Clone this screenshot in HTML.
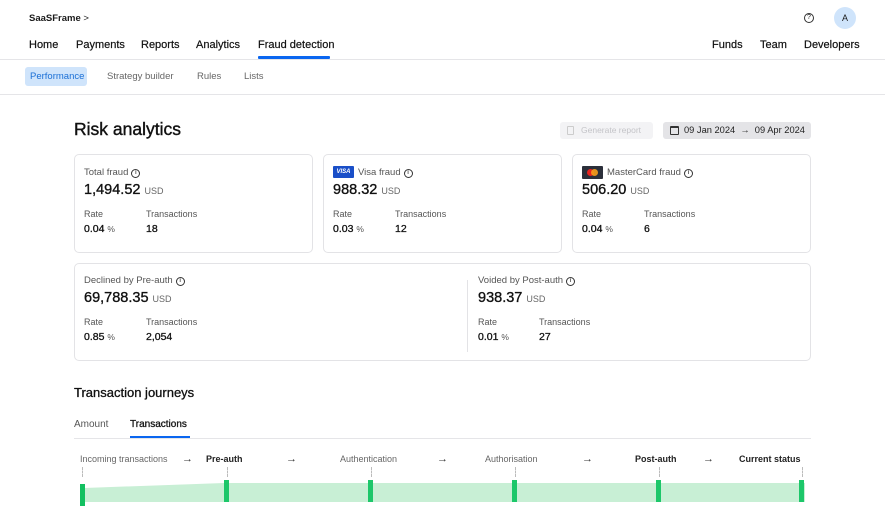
<!DOCTYPE html>
<html><head><meta charset="utf-8"><style>
*{margin:0;padding:0;box-sizing:border-box}
body{width:885px;height:502px;overflow:hidden;background:#fff;font-family:"Liberation Sans",sans-serif;color:#1a1a1a;position:relative}
.a{position:absolute;white-space:nowrap}
.nav{font-size:11px;top:39px;color:#111;-webkit-text-stroke:0.2px #111}
.sub{font-size:9.5px;top:71px;color:#666}
.card{position:absolute;border:1px solid #e3e3e6;border-radius:5px;background:#fff}
.lab{font-size:9.5px;color:#555}
.val{font-size:14.5px;color:#111;-webkit-text-stroke:0.35px #111}
.val small{font-size:9px;color:#666;-webkit-text-stroke:0}
.sm{font-size:9px;color:#555}
.nv{font-size:10.5px;color:#111;-webkit-text-stroke:0.3px #111}
.nv small{font-size:8.5px;color:#555;-webkit-text-stroke:0}
.i{display:inline-block;width:9px;height:9px;border:1px solid #333;border-radius:50%;font-size:6px;line-height:7px;text-align:center;vertical-align:1px;margin-left:3px;font-weight:bold}
.jh{font-size:9px;color:#666;top:454px}
.bar{position:absolute;top:480px;width:5px;height:22px;background:#1dc76a}
.tick{position:absolute;top:467px;height:10px;border-left:1px dashed #bbb}
.ar{font-size:11px;top:453px;color:#333}
</style></head><body>
<div class="a" style="left:29px;top:13px;font-size:9.5px;font-weight:bold">SaaSFrame <span style="font-weight:normal">&gt;</span></div>
<div class="a nav" style="left:29px">Home</div>
<div class="a nav" style="left:76px">Payments</div>
<div class="a nav" style="left:141px">Reports</div>
<div class="a nav" style="left:196px">Analytics</div>
<div class="a nav" style="left:258px">Fraud detection</div>
<div class="a" style="left:258px;top:56px;width:72px;height:3px;background:#0a66f0;border-radius:1px"></div>
<div class="a nav" style="left:712px">Funds</div>
<div class="a nav" style="left:760px">Team</div>
<div class="a nav" style="left:804px">Developers</div>
<div class="a" style="left:804px;top:13px;width:10px;height:10px;border:1px solid #333;border-radius:50%;font-size:7px;text-align:center;line-height:8px">?</div>
<div class="a" style="left:834px;top:7px;width:22px;height:22px;border-radius:50%;background:#cfe4fb;font-size:9px;text-align:center;line-height:22px">A</div>
<div class="a" style="left:0;top:59px;width:885px;height:1px;background:#e5e5e8"></div>
<div class="a" style="left:25px;top:67px;width:62px;height:19px;background:#cfe4fb;border-radius:3px"></div>
<div class="a sub" style="left:30px;color:#1a6fd6">Performance</div>
<div class="a sub" style="left:107px">Strategy builder</div>
<div class="a sub" style="left:197px">Rules</div>
<div class="a sub" style="left:244px">Lists</div>
<div class="a" style="left:0;top:94px;width:885px;height:1px;background:#e5e5e8"></div>

<div class="a" style="left:74px;top:119px;font-size:17.5px;color:#111;-webkit-text-stroke:0.4px #111">Risk analytics</div>
<div class="a" style="left:560px;top:122px;width:93px;height:17px;background:#f3f3f5;border-radius:3px;font-size:8.5px;color:#c4c4c8;padding-left:21px;line-height:17px">Generate report</div>
<div class="a" style="left:567px;top:126px;width:7px;height:9px;border:1px solid #ccc;border-radius:1px"></div>
<div class="a" style="left:663px;top:122px;width:148px;height:17px;background:#e4e4e7;border-radius:3px;font-size:9.3px;color:#222;padding-left:21px;line-height:17px">09 Jan 2024 &nbsp;→&nbsp; 09 Apr 2024</div>
<div class="a" style="left:670px;top:126px;width:9px;height:9px;border:1px solid #333;border-top-width:2px;border-radius:1px"></div>

<div class="card" style="left:74px;top:154px;width:239px;height:99px"></div>
<div class="card" style="left:323px;top:154px;width:239px;height:99px"></div>
<div class="card" style="left:572px;top:154px;width:239px;height:99px"></div>
<div class="card" style="left:74px;top:263px;width:737px;height:98px"></div>
<div class="a" style="left:467px;top:280px;width:1px;height:72px;background:#e3e3e6"></div>

<div class="a lab" style="left:84px;top:167px">Total fraud<span class="i">i</span></div>
<div class="a val" style="left:84px;top:182px">1,494.52 <small>USD</small></div>
<div class="a sm" style="left:84px;top:209px">Rate</div><div class="a sm" style="left:146px;top:209px">Transactions</div>
<div class="a nv" style="left:84px;top:223px">0.04 <small>%</small></div><div class="a nv" style="left:146px;top:223px">18</div>

<div class="a" style="left:333px;top:166px;width:21px;height:12px;background:#1a4fc8;border-radius:1px;color:#fff;font-size:6px;font-weight:bold;font-style:italic;text-align:center;line-height:12px">VISA</div>
<div class="a lab" style="left:358px;top:167px">Visa fraud<span class="i">i</span></div>
<div class="a val" style="left:333px;top:182px">988.32 <small>USD</small></div>
<div class="a sm" style="left:333px;top:209px">Rate</div><div class="a sm" style="left:395px;top:209px">Transactions</div>
<div class="a nv" style="left:333px;top:223px">0.03 <small>%</small></div><div class="a nv" style="left:395px;top:223px">12</div>

<div class="a" style="left:582px;top:166px;width:21px;height:13px;background:#2b2f3a;border-radius:1px"></div>
<div class="a" style="left:587px;top:169px;width:7px;height:7px;border-radius:50%;background:#e8231f"></div>
<div class="a" style="left:591px;top:169px;width:7px;height:7px;border-radius:50%;background:#f79e1b;opacity:.9"></div>
<div class="a lab" style="left:607px;top:167px">MasterCard fraud<span class="i">i</span></div>
<div class="a val" style="left:582px;top:182px">506.20 <small>USD</small></div>
<div class="a sm" style="left:582px;top:209px">Rate</div><div class="a sm" style="left:644px;top:209px">Transactions</div>
<div class="a nv" style="left:582px;top:223px">0.04 <small>%</small></div><div class="a nv" style="left:644px;top:223px">6</div>

<div class="a lab" style="left:84px;top:275px">Declined by Pre-auth<span class="i">i</span></div>
<div class="a val" style="left:84px;top:290px">69,788.35 <small>USD</small></div>
<div class="a sm" style="left:84px;top:317px">Rate</div><div class="a sm" style="left:146px;top:317px">Transactions</div>
<div class="a nv" style="left:84px;top:331px">0.85 <small>%</small></div><div class="a nv" style="left:146px;top:331px">2,054</div>

<div class="a lab" style="left:478px;top:275px">Voided by Post-auth<span class="i">i</span></div>
<div class="a val" style="left:478px;top:290px">938.37 <small>USD</small></div>
<div class="a sm" style="left:478px;top:317px">Rate</div><div class="a sm" style="left:539px;top:317px">Transactions</div>
<div class="a nv" style="left:478px;top:331px">0.01 <small>%</small></div><div class="a nv" style="left:539px;top:331px">27</div>

<div class="a" style="left:74px;top:385px;font-size:13px;color:#111;-webkit-text-stroke:0.3px #111">Transaction journeys</div>
<div class="a" style="left:74px;top:419px;font-size:10px;color:#555">Amount</div>
<div class="a" style="left:130px;top:419px;font-size:10px;color:#111;-webkit-text-stroke:0.3px #111">Transactions</div>
<div class="a" style="left:74px;top:438px;width:737px;height:1px;background:#e5e5e8"></div>
<div class="a" style="left:130px;top:436px;width:60px;height:2px;background:#0a66f0"></div>

<div class="a jh" style="left:80px">Incoming transactions</div>
<div class="a jh" style="left:206px;color:#222;font-weight:bold">Pre-auth</div>
<div class="a jh" style="left:340px">Authentication</div>
<div class="a jh" style="left:485px">Authorisation</div>
<div class="a jh" style="left:635px;color:#222;font-weight:bold">Post-auth</div>
<div class="a jh" style="left:739px;color:#222;font-weight:bold">Current status</div>
<div class="a ar" style="left:182px">→</div><div class="a ar" style="left:286px">→</div><div class="a ar" style="left:437px">→</div><div class="a ar" style="left:582px">→</div><div class="a ar" style="left:703px">→</div>
<div class="tick" style="left:82px"></div><div class="tick" style="left:227px"></div><div class="tick" style="left:371px"></div><div class="tick" style="left:515px"></div><div class="tick" style="left:659px"></div><div class="tick" style="left:802px"></div>
<svg class="a" style="left:80px;top:480px" width="730" height="22"><path d="M4 8 L144 3 L144 22 L4 22Z M144 3 L725 3 L725 22 L144 22Z" fill="#c8efd5"/></svg>
<div class="bar" style="left:80px;top:484px;background:#12c060"></div>
<div class="bar" style="left:224px"></div><div class="bar" style="left:368px"></div><div class="bar" style="left:512px"></div><div class="bar" style="left:656px"></div><div class="bar" style="left:799px"></div>
</body></html>
